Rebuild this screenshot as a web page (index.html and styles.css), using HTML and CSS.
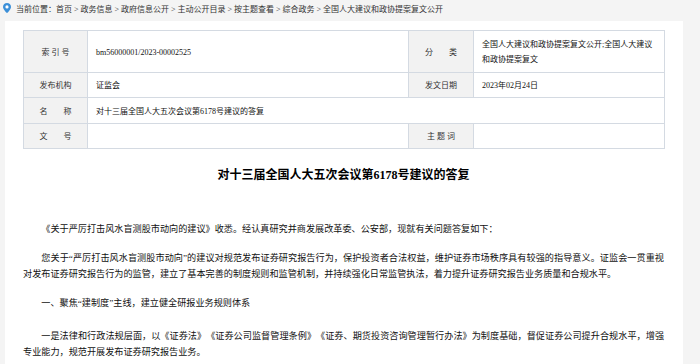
FILE: index.html
```html
<!DOCTYPE html>
<html lang="zh-CN">
<head>
    <meta charset="utf-8">
    <title>对十三届全国人大五次会议第6178号建议的答复</title>
    <link rel="stylesheet" href="styles.css">
</head>
<body>
    <div class="crumbs">
        <svg class="pin" width="8" height="10" viewBox="0 0 8 10">
            <path d="M4 0C1.8 0 0 1.7 0 3.9 0 6.6 4 10 4 10S8 6.6 8 3.9C8 1.7 6.2 0 4 0z" fill="#3b8fd8"/>
            <circle cx="4" cy="3.9" r="1.6" fill="#fff"/>
        </svg>
        <span>当前位置：首页 &gt; 政务信息 &gt; 政府信息公开 &gt; 主动公开目录 &gt; 按主题查看 &gt; 综合政务 &gt; 全国人大建议和政协提案复文公开</span>
    </div>

    <div class="main">
        <table class="info">
            <colgroup>
                <col class="c1"><col class="c2"><col class="c3"><col class="c4">
            </colgroup>
            <tr class="tall">
                <th>索 引 号</th>
                <td>bm56000001/2023-00002525</td>
                <th>分　　类</th>
                <td class="wide">全国人大建议和政协提案复文公开;全国人大建议和政协提案复文</td>
            </tr>
            <tr>
                <th>发布机构</th>
                <td>证监会</td>
                <th>发文日期</th>
                <td>2023年02月24日</td>
            </tr>
            <tr class="r3">
                <th>名　　称</th>
                <td colspan="3">对十三届全国人大五次会议第6178号建议的答复</td>
            </tr>
            <tr>
                <th>文　　号</th>
                <td></td>
                <th>主 题 词</th>
                <td></td>
            </tr>
        </table>

        <h1 class="title">对十三届全国人大五次会议第6178号建议的答复</h1>

        <div class="content">
            <p>《关于严厉打击风水盲测股市动向的建议》收悉。经认真研究并商发展改革委、公安部，现就有关问题答复如下：</p>
            <p>您关于“严厉打击风水盲测股市动向”的建议对规范发布证券研究报告行为，保护投资者合法权益，维护证券市场秩序具有较强的指导意义。证监会一贯重视对发布证券研究报告行为的监管，建立了基本完善的制度规则和监管机制，并持续强化日常监管执法，着力提升证券研究报告业务质量和合规水平。</p>
            <p class="sub">一、聚焦“建制度”主线，建立健全研报业务规则体系</p>
            <p>一是法律和行政法规层面，以《证券法》《证券公司监督管理条例》《证券、期货投资咨询管理暂行办法》为制度基础，督促证券公司提升合规水平，增强专业能力，规范开展发布证券研究报告业务。</p>
        </div>
    </div>
</body>
</html>
```

FILE: styles.css
```css
body {
    margin: 0;
    padding: 0;
    background-color: #f4f4f4;
    color: #111;
    font-family: "Liberation Serif", "Noto Sans CJK SC", serif;
    font-size: 9.15px;
    text-spacing-trim: space-all;
}
.crumbs {
    height: 21px;
    padding-left: 3px;
    display: flex;
    align-items: center;
    gap: 5px;
    color: #333;
    font-size: 8px;
}
.crumbs span {
    margin-top: -4px;
}
.pin {
    margin-top: -5px;
}
.main {
    background-color: #fff;
    margin: 0 17px 0 5px;
    padding: 9px 19px 20px 18px;
}
.info {
    width: 641px;
    border-collapse: collapse;
    table-layout: fixed;
    font-size: 8px;
}
.info .c1 { width: 64px; }
.info .c2 { width: 321px; }
.info .c3 { width: 65px; }
.info .c4 { width: 191px; }
.info th,
.info td {
    border: 1px solid #d4dae2;
    line-height: 19px;
    height: 21px;
    padding: 2px 8px 1px;
    font-weight: normal;
}
.info th {
    background-color: #f2f2f2;
    text-align: center;
    color: #333;
}
.info td {
    text-align: left;
}
.info td.wide {
    padding-right: 5px;
}
.info .tall td,
.info .tall th {
    height: 38px;
    line-height: 15px;
}
.info .r3 td,
.info .r3 th {
    height: 22px;
}
.title {
    margin: 13px 0 0;
    height: 26px;
    line-height: 26px;
    font-size: 12px;
    font-weight: bold;
    text-align: center;
    color: #000;
}
.content {
    margin-top: 33px;
}
.content p {
    margin: 0 0 13px;
    line-height: 16px;
    text-indent: 2em;
    text-align: justify;
}
.content .sub {
    margin-bottom: 17px;
}
```
